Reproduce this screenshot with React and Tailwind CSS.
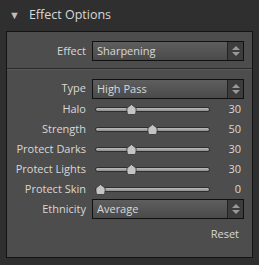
import { useState } from "react";

function Select({ value }) {
  return (
    <div className="flex h-[20px] w-[152px] border border-[#111] bg-gradient-to-b from-[#5e5e5e] to-[#4a4a4a]">
      <div className="flex-1 pl-[4px] leading-[18px] text-[#d8d8d8]">{value}</div>
      <div className="flex w-[16px] flex-col items-center justify-center gap-[2px] border-l border-[#222] bg-[#3d3d3d]">
        <div className="h-0 w-0 border-x-[4px] border-b-[4px] border-x-transparent border-b-[#999]" />
        <div className="h-0 w-0 border-x-[4px] border-t-[4px] border-x-transparent border-t-[#999]" />
      </div>
    </div>
  );
}

function Slider({ value }) {
  const left = value * 1.05 - 0.5;
  return (
    <div className="relative ml-[3px] h-[20px] w-[115px]">
      <div className="absolute left-0 right-0 top-[8px] h-[5px] rounded-full border border-[#2e2e2e] bg-gradient-to-b from-[#bdbdbd] to-[#8e8e8e]" />
      <svg
        className="absolute top-[5px]"
        style={{ left }}
        width="11"
        height="11"
        viewBox="0 0 11 11"
      >
        <path d="M5.5 0.5 L10 4 Q10.5 9.5 8.5 10.5 L2.5 10.5 Q0.5 9.5 1 4 Z" fill="#c4c4c4" stroke="#333" strokeWidth="0.8" />
      </svg>
    </div>
  );
}

function Row({ label, children, h = "h-[20px]" }) {
  return (
    <div className={`flex ${h} items-center`}>
      <div className="w-[79px] text-right text-[#d8d8d8]">{label}</div>
      <div className="ml-[6px]">{children}</div>
    </div>
  );
}

function SliderRow({ label, value }) {
  return (
    <Row label={label}>
      <div className="flex items-center">
        <Slider value={value} />
        <div className="w-[31px] text-right text-[#d8d8d8]">{value}</div>
      </div>
    </Row>
  );
}

export default function App() {
  const [open] = useState(true);
  return (
    <div
      className="h-[265px] w-[259px] bg-[#2f2f2f] text-[11px]"
      style={{ fontFamily: '"Open Sans", "Noto Sans", sans-serif' }}
    >
      <div className="flex h-[31px] items-center pl-[9px]">
        <span className="text-[11px] text-[#bdbdbd]">{open ? "▼" : "▶"}</span>
        <span className="ml-[9px] text-[12.5px] text-[#d8d8d8]">Effect Options</span>
      </div>
      <div className="mx-[6px] h-[227px] border border-[#141414] bg-[#4d4d4d]">
        <div className="pt-[9px]">
          <Row label="Effect">
            <Select value="Sharpening" />
          </Row>
        </div>
        <div className="mt-[7px] border-t border-b border-t-[#2a2a2a] border-b-[#5a5a5a]" />
        <div className="pt-[8px]">
          <Row label="Type" h="h-[21px]">
            <Select value="High Pass" />
          </Row>
          <SliderRow label="Halo" value={30} />
          <SliderRow label="Strength" value={50} />
          <SliderRow label="Protect Darks" value={30} />
          <SliderRow label="Protect Lights" value={30} />
          <SliderRow label="Protect Skin" value={0} />
          <Row label="Ethnicity">
            <Select value="Average" />
          </Row>
          <div className="mt-[7px] pr-[13px] text-right text-[#d8d8d8]">Reset</div>
        </div>
      </div>
    </div>
  );
}
